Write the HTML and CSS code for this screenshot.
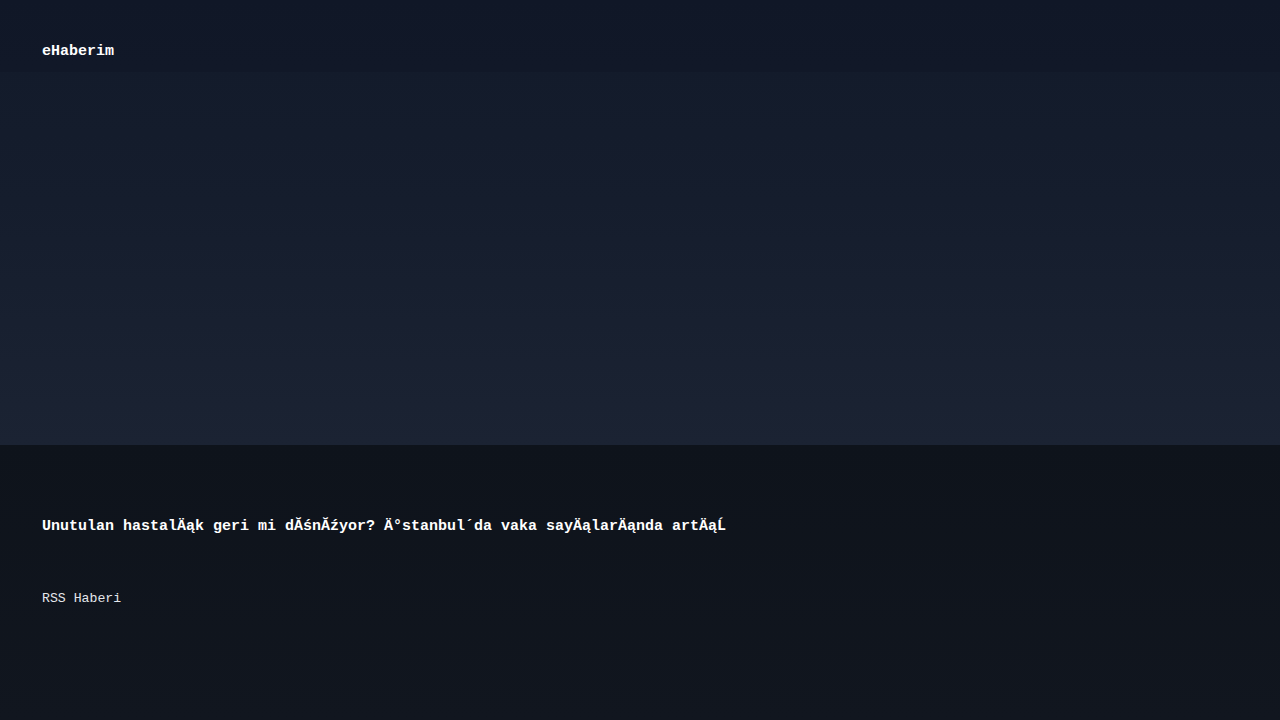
FILE: index.html
```html
<!DOCTYPE html>
<html lang="tr">
<head>
<meta charset="utf-8">
<title>eHaberim</title>
<link rel="stylesheet" href="styles.css">
</head>
<body>
<section class="hero">
  <header class="topbar">
    <span class="logo">eHaberim</span>
  </header>
</section>
<main class="article">
  <h1 class="title">Unutulan hastalÄąk geri mi dĂśnĂźyor? Ä°stanbul´da vaka sayÄąlarÄąnda artÄąĹ</h1>
  <p class="source">RSS Haberi</p>
</main>
</body>
</html>
```
FILE: styles.css
```css
html, body {
  margin: 0;
  padding: 0;
  height: 100%;
}
body {
  font-family: "Liberation Mono", "DejaVu Sans Mono", monospace;
  color: #ffffff;
  background: #10151e;
}
.hero {
  height: 445px;
  background: linear-gradient(180deg, #121a2a 0%, #151d2d 45%, #1b2333 100%);
}
.topbar {
  height: 72px;
  box-sizing: border-box;
  padding: 42px 42px 0;
  background: rgba(14, 20, 34, 0.35);
}
.logo {
  display: block;
  font-size: 15px;
  font-weight: 700;
  line-height: 20px;
}
.article {
  height: 275px;
  box-sizing: border-box;
  padding: 72px 42px 0;
  background: linear-gradient(180deg, #0e131b 0%, #11161f 100%);
}
.title {
  margin: 0;
  font-size: 15px;
  font-weight: 700;
  line-height: 20px;
}
.source {
  margin: 52px 0 0;
  font-size: 13.2px;
  font-weight: 400;
  line-height: 20px;
  color: #e5e7eb;
}
```
